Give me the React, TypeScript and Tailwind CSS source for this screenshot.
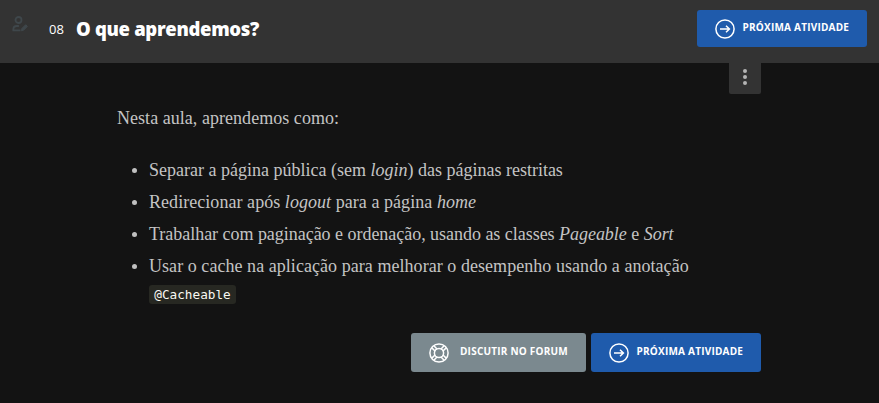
import type { ReactNode } from 'react';

function ArrowCircle() {
  return (
    <svg className="size-5 shrink-0" viewBox="0 0 20 20" fill="none" stroke="currentColor" strokeWidth="1.5">
      <circle cx="10" cy="10" r="9.1" />
      <path d="M5 10h9.2M11 6.8l3.4 3.2-3.4 3.2" />
    </svg>
  );
}

function Lifebuoy() {
  return (
    <svg className="size-5 shrink-0" viewBox="0 0 20 20" fill="none" stroke="currentColor" strokeWidth="1.5">
      <circle cx="10" cy="10" r="9.1" />
      <circle cx="10" cy="10" r="4.6" />
      <path d="M2.8 4.9l3.5 3.3M4.9 2.8l3.3 3.5M17.2 4.9l-3.5 3.3M15.1 2.8l-3.3 3.5M2.8 15.1l3.5-3.3M4.9 17.2l3.3-3.5M17.2 15.1l-3.5-3.3M15.1 17.2l-3.3-3.5" />
    </svg>
  );
}

function UserEdit() {
  return (
    <svg className="h-4 w-4" viewBox="0 0 16 16" fill="none" stroke="currentColor" strokeWidth="1.8">
      <circle cx="6.5" cy="4" r="3" />
      <path d="M8.5 14.3H1.3v-.8c0-2.2 1.5-3.5 3.6-3.5h2" />
      <path d="M9.5 14.8l.4-2.3 3.8-3.8 1.7 1.7-3.8 3.8z" fill="currentColor" strokeWidth="1" />
    </svg>
  );
}

function NextButton({ className }: { className: string }) {
  return (
    <button className={`flex w-[170px] items-center rounded-[3px] bg-[#1f5bac] pl-[18px] text-white ${className}`}>
      <ArrowCircle />
      <span className="mb-[2px] ml-[7.5px] text-[10px] font-bold tracking-[0.22px] whitespace-nowrap">PRÓXIMA ATIVIDADE</span>
    </button>
  );
}

function Item({ className, children }: { className: string; children: ReactNode }) {
  return (
    <li className="flex h-8 items-center">
      <span className="mr-[12px] ml-[15px] size-[5px] shrink-0 rounded-full bg-[#c0c0c0]" />
      <span className={`whitespace-nowrap ${className}`}>{children}</span>
    </li>
  );
}

export default function App() {
  return (
    <div className="h-[403px] w-[879px] overflow-hidden bg-[#131313] font-['Open_Sans',sans-serif]">
      <header className="flex h-[63px] items-start bg-[#333333] pr-3 text-white">
        <div className="mt-4 ml-3 w-[37px] text-[#3f474b]"><UserEdit /></div>
        <span className="mt-[19px] w-[27px] text-[13px] leading-5">08</span>
        <h1 className="mt-[15px] text-[18.5px] leading-7 font-extrabold tracking-[-0.32px] whitespace-nowrap">O que aprendemos?</h1>
        <NextButton className="mt-[10px] ml-auto h-[37px]" />
      </header>
      <main className="ml-[117px] w-[644px]">
        <div className="flex h-[39px] items-start justify-end">
          <button className="flex h-[31px] w-8 flex-col items-center justify-center gap-[2px] rounded-b-[2px] bg-[#333333] pb-[3px]">
            <i className="size-1 rounded-full bg-[#b4b4b4]" />
            <i className="size-1 rounded-full bg-[#b4b4b4]" />
            <i className="size-1 rounded-full bg-[#b4b4b4]" />
          </button>
        </div>
        <div className="font-['Liberation_Serif',serif] text-[18px] leading-8 text-[#c4c4c4]">
          <p className="whitespace-nowrap tracking-[0.04px]">Nesta aula, aprendemos como:</p>
          <ul className="mt-5">
            <Item className="tracking-[0px]">Separar a página pública (sem <em>login</em>) das páginas restritas</Item>
            <Item className="tracking-[0.05px]">Redirecionar após <em>logout</em> para a página <em>home</em></Item>
            <Item className="tracking-[-0.03px]">Trabalhar com paginação e ordenação, usando as classes <em>Pageable</em> e <em>Sort</em></Item>
            <Item className="tracking-[0.05px]">Usar o cache na aplicação para melhorar o desempenho usando a anotação</Item>
          </ul>
          <code className="mt-[3px] ml-8 flex h-[19px] w-[87px] items-center justify-center rounded-[3px] bg-[#272822] pt-px font-['DejaVu_Sans_Mono',monospace] text-[12.7px] leading-none text-[#f8f8f2]">@Cacheable</code>
        </div>
        <div className="mt-[29px] flex justify-end gap-[5px]">
          <button className="flex h-[39px] w-[175px] items-center rounded-[3px] bg-[#7b898f] pl-[18px] text-white">
            <Lifebuoy />
            <span className="mb-[2px] ml-[11px] text-[10px] font-bold tracking-[0.22px] whitespace-nowrap">DISCUTIR NO FORUM</span>
          </button>
          <NextButton className="h-[39px]" />
        </div>
      </main>
    </div>
  );
}
